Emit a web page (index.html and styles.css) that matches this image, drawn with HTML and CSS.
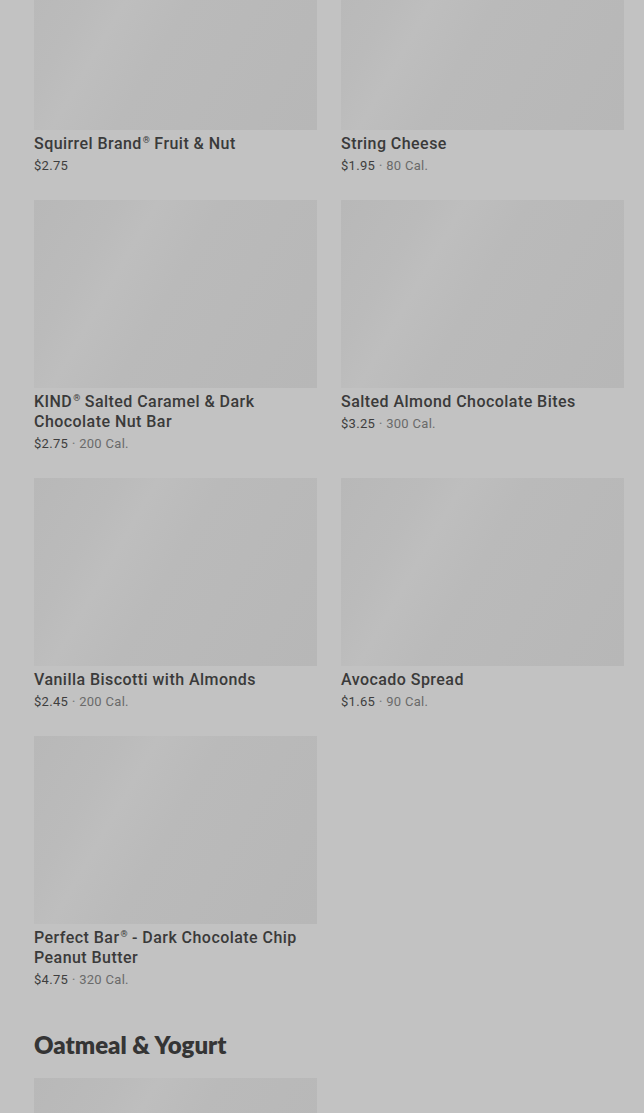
FILE: index.html
```html
<!DOCTYPE html>
<html lang="en">
<head>
    <meta charset="UTF-8">
    <meta name="viewport" content="width=device-width, initial-scale=1.0">
    <title>Menu</title>
    <link rel="stylesheet" href="styles.css">
</head>
<body>
    <div class="menu">
        <div class="item-grid">
            <div class="item">
                <div class="item-img"></div>
                <div class="item-name">Squirrel Brand<sup class="reg">®</sup> Fruit &amp; Nut</div>
                <div class="item-meta"><span class="price">$2.75</span></div>
            </div>
            <div class="item">
                <div class="item-img"></div>
                <div class="item-name">String Cheese</div>
                <div class="item-meta"><span class="price">$1.95</span><span class="dot">•</span><span class="cal">80 Cal.</span></div>
            </div>
            <div class="item">
                <div class="item-img"></div>
                <div class="item-name"><span class="line">KIND<sup class="reg">®</sup> Salted Caramel &amp; Dark</span> <span class="line">Chocolate Nut Bar</span></div>
                <div class="item-meta"><span class="price">$2.75</span><span class="dot">•</span><span class="cal">200 Cal.</span></div>
            </div>
            <div class="item">
                <div class="item-img"></div>
                <div class="item-name">Salted Almond Chocolate Bites</div>
                <div class="item-meta"><span class="price">$3.25</span><span class="dot">•</span><span class="cal">300 Cal.</span></div>
            </div>
            <div class="item">
                <div class="item-img"></div>
                <div class="item-name">Vanilla Biscotti with Almonds</div>
                <div class="item-meta"><span class="price">$2.45</span><span class="dot">•</span><span class="cal">200 Cal.</span></div>
            </div>
            <div class="item">
                <div class="item-img"></div>
                <div class="item-name">Avocado Spread</div>
                <div class="item-meta"><span class="price">$1.65</span><span class="dot">•</span><span class="cal">90 Cal.</span></div>
            </div>
            <div class="item">
                <div class="item-img"></div>
                <div class="item-name"><span class="line">Perfect Bar<sup class="reg">®</sup> - Dark Chocolate Chip</span> <span class="line">Peanut Butter</span></div>
                <div class="item-meta"><span class="price">$4.75</span><span class="dot">•</span><span class="cal">320 Cal.</span></div>
            </div>
        </div>

        <h2 class="section-title">Oatmeal &amp; Yogurt</h2>
        <div class="item-grid">
            <div class="item">
                <div class="item-img"></div>
            </div>
        </div>
    </div>
</body>
</html>
```

FILE: styles.css
```css
html, body {
    margin: 0;
    background: #c2c2c2;
}
body {
    font-family: Roboto, "Liberation Sans", sans-serif;
    color: #3a3a3a;
    overflow: hidden;
}
.menu {
    padding: 0 20px 0 34px;
    margin-top: -58px;
}
.item-grid {
    display: grid;
    grid-template-columns: 1fr 1fr;
    column-gap: 24px;
    row-gap: 26px;
}
.item-img {
    height: 188px;
    background: linear-gradient(120deg, #b8b8b8 0%, #bbbbbb 22%, #bebebe 32%, #bababa 48%, #b7b7b7 100%);
}
.item-name {
    margin-top: 4px;
    font-size: 16px;
    line-height: 20px;
    font-weight: 500;
    letter-spacing: 0.45px;
    color: #3a3a3a;
}
.line {
    display: inline-block;
}
.reg {
    display: inline-block;
    font-size: 9px;
    line-height: 12px;
    vertical-align: top;
    margin-left: 1px;
    letter-spacing: 0;
}
.item-meta {
    display: flex;
    align-items: center;
    gap: 4px;
    margin-top: 4px;
    height: 16px;
    font-size: 13px;
    line-height: 16px;
    letter-spacing: 0.3px;
    color: #3e3e3e;
}
.dot {
    color: #777777;
    font-size: 8px;
}
.cal {
    color: #6a6a6a;
}
.section-title {
    font-family: Lato, "Open Sans", sans-serif;
    font-weight: 800;
    font-size: 24px;
    line-height: 32px;
    letter-spacing: 0;
    color: #353535;
    margin: 41px 0 17px;
}
```
